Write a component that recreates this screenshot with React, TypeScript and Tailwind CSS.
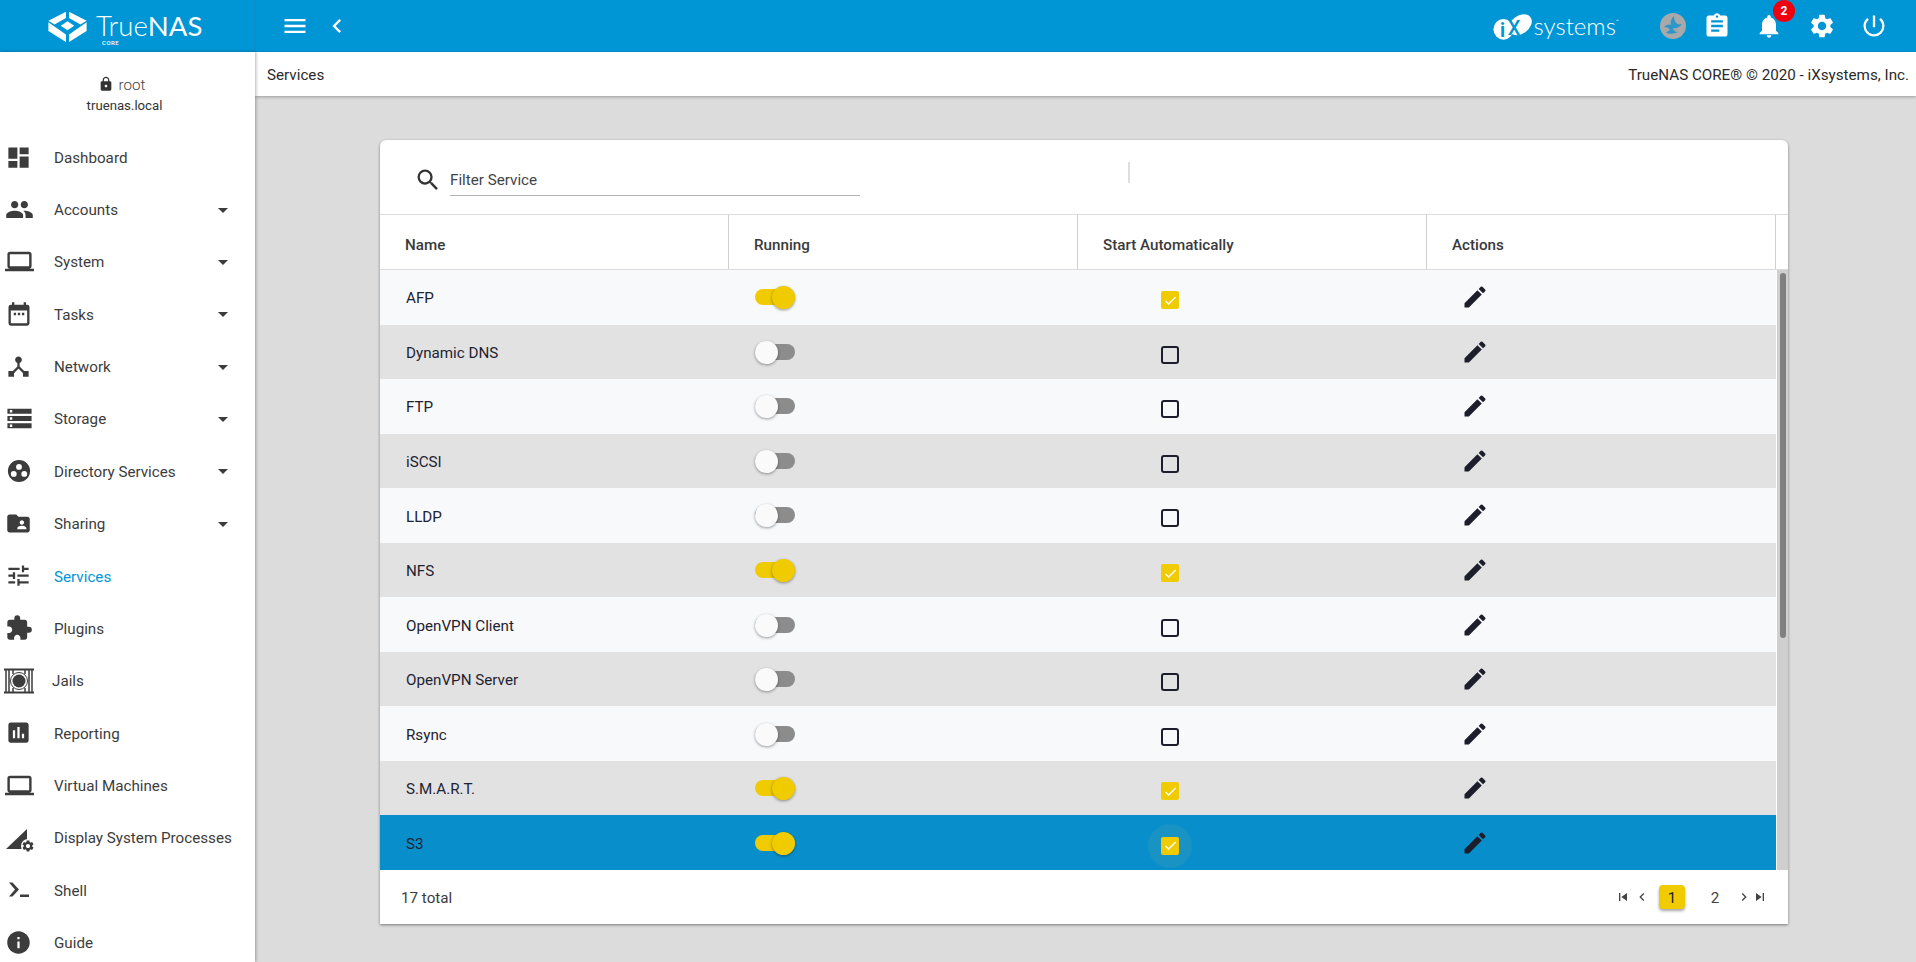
import React from 'react';
import {
  MdDashboard,
  MdPeople,
  MdLaptop,
  MdDeviceHub,
  MdStorage,
  MdFolderShared,
  MdTune,
  MdExtension,
  MdAssessment,
  MdInfo,
  MdArrowDropDown,
  MdMenu,
  MdChevronLeft,
  MdChevronRight,
  MdAssignment,
  MdNotifications,
  MdSettings,
  MdPowerSettingsNew,
  MdLock,
  MdSearch,
  MdEdit,
  MdSkipPrevious,
  MdSkipNext,
  MdCheck,
} from 'react-icons/md';

const CalendarIcon = () => (
  <svg width="28" height="28" viewBox="0 0 24 24" fill="currentColor">
    <path d="M19 4h-1V2h-2v2H8V2H6v2H5a2 2 0 0 0-2 2v14a2 2 0 0 0 2 2h14a2 2 0 0 0 2-2V6a2 2 0 0 0-2-2zm0 16H5V9h14v11z" />
    <path d="M7.500 11h2v2h-2zM11 11h2v2h-2zM14.500 11h2v2h-2z" />
  </svg>
);

const DirectoryIcon = () => (
  <svg width="28" height="28" viewBox="0 0 24 24" fill="currentColor">
    <path
      fillRule="evenodd"
      d="M12 2.500a9.500 9.500 0 1 0 0 19 9.500 9.500 0 0 0 0-19zM12 6a2.500 2.500 0 1 1 0 5 2.500 2.500 0 0 1 0-5zM7.500 12a2.500 2.500 0 1 1 0 5 2.500 2.500 0 0 1 0-5zM16.500 12a2.500 2.500 0 1 1 0 5 2.500 2.500 0 0 1 0-5z"
    />
  </svg>
);

const JailIcon = () => (
  <svg width="32" height="28" viewBox="0 0 32 28" fill="none" stroke="currentColor">
    <path d="M1 2.500h30M1 25.500h30" strokeWidth="2" />
    <path d="M3 3v22M6 3v22M26 3v22M29 3v22" strokeWidth="1.500" />
    <circle cx="16" cy="14" r="8.500" strokeWidth="1" />
    <circle cx="16" cy="14" r="6.500" fill="currentColor" stroke="none" />
    <path d="M10 3v4M22 3v4M10 21v4M22 21v4" strokeWidth="1.500" />
  </svg>
);

const ProcessIcon = () => (
  <span className="relative flex h-[28px] w-[28px]">
    <svg width="28" height="28" viewBox="0 0 28 28" fill="currentColor">
      <path d="M1 25 L22 5 V18 L17 25 Z" />
    </svg>
    <MdSettings size={14} className="absolute right-[-2px] bottom-[-1px] rounded-full bg-white" />
  </span>
);

const ShellIcon = () => (
  <svg width="28" height="28" viewBox="0 0 28 28" fill="currentColor">
    <path d="M4 6.500h3.500L14 13.500 7.500 20.500H4l6-7z" />
    <path d="M15 18.500h9v2.500h-9z" />
  </svg>
);

const TrueNasMark = () => (
  <svg width="39" height="31" viewBox="27 22 111 90" fill="white">
    <path d="M78 24 27 50 45 61 78 42zM87 24 138 50 120 61 87 42z" />
    <path d="M27 55V80L78 112V90zM138 55V80L87 112V90z" />
    <path d="M82.500 52 102 65 82.500 78 63 65z" />
  </svg>
);

const IxMark = () => (
  <svg width="40" height="27" viewBox="0 0 115 78" className="overflow-visible">
    <ellipse cx="30" cy="47" rx="29" ry="30" fill="white" />
    <ellipse cx="78" cy="34" rx="37" ry="26" fill="white" transform="rotate(-35 78 34)" />
    <text x="20" y="68" fontFamily="Roboto, sans-serif" fontSize="56" fontWeight="700" fill="#0095d5">
      i
    </text>
    <text x="42" y="64" fontFamily="Roboto, sans-serif" fontSize="58" fontWeight="500" fill="#0095d5">
      X
    </text>
  </svg>
);

const AvatarIcon = () => (
  <svg width="26" height="26" viewBox="0 0 26 26">
    <circle cx="13" cy="13" r="13" fill="#a9a9a9" />
    <path
      d="M14 3C11 6 10 9 11 12 8 11 6 12 4 14 7 14 9 15 10 17 8 18 7 19 6 20 10 21 14 21 18 19 15 19 13 17 13 15 16 16 20 14 22 11 19 12 16 11 15 8 14 6 14 4 14 3Z"
      fill="#2e96c9"
    />
  </svg>
);

const navItems = [
  { label: 'Dashboard', icon: <MdDashboard size={27} /> },
  { label: 'Accounts', icon: <MdPeople size={29} />, caret: true },
  { label: 'System', icon: <MdLaptop size={29} />, caret: true },
  { label: 'Tasks', icon: <CalendarIcon />, caret: true },
  { label: 'Network', icon: <MdDeviceHub size={27} />, caret: true },
  { label: 'Storage', icon: <MdStorage size={29} />, caret: true },
  { label: 'Directory Services', icon: <DirectoryIcon />, caret: true },
  { label: 'Sharing', icon: <MdFolderShared size={27} />, caret: true },
  { label: 'Services', icon: <MdTune size={27} />, active: true },
  { label: 'Plugins', icon: <MdExtension size={28} /> },
  { label: 'Jails', icon: <JailIcon />, jail: true },
  { label: 'Reporting', icon: <MdAssessment size={27} /> },
  { label: 'Virtual Machines', icon: <MdLaptop size={29} /> },
  { label: 'Display System Processes', icon: <ProcessIcon /> },
  { label: 'Shell', icon: <ShellIcon /> },
  { label: 'Guide', icon: <MdInfo size={27} /> },
];

const services = [
  { name: 'AFP', on: true },
  { name: 'Dynamic DNS', on: false },
  { name: 'FTP', on: false },
  { name: 'iSCSI', on: false },
  { name: 'LLDP', on: false },
  { name: 'NFS', on: true },
  { name: 'OpenVPN Client', on: false },
  { name: 'OpenVPN Server', on: false },
  { name: 'Rsync', on: false },
  { name: 'S.M.A.R.T.', on: true },
  { name: 'S3', on: true },
];

const Toggle = ({ on }: { on: boolean }) => (
  <span className="relative block h-[16px] w-[40px]">
    <span className={`block h-full w-full rounded-full ${on ? 'bg-[#f0cb00]' : 'bg-[#8c8c8c]'}`} />
    <span
      className={`absolute top-[-3px] h-[23px] w-[23px] rounded-full shadow-[0_1px_3px_rgba(0,0,0,0.4)] ${
        on ? 'right-0 bg-[#f0cb00]' : 'left-0 bg-[#fafafa]'
      }`}
    />
  </span>
);

const Checkbox = ({ on, halo }: { on: boolean; halo?: boolean }) => (
  <span className="relative block h-[18px] w-[18px]">
    {halo && <span className="absolute top-[-13px] left-[-13px] h-[44px] w-[44px] rounded-full bg-[#1893c4]" />}
    {on ? (
      <span className="relative flex h-[18px] w-[18px] items-center justify-center rounded-[2px] bg-[#f0cb00] text-white">
        <MdCheck size={15} />
      </span>
    ) : (
      <span className="block h-[18px] w-[18px] rounded-[3px] border-2 border-[#1c1f2b]" />
    )}
  </span>
);

export default function App() {
  return (
    <div className="flex h-[962px] w-[1916px] flex-col overflow-hidden bg-[#dcdcdc] font-['Roboto',sans-serif]">
      {/* Top bar */}
      <div className="flex h-[52px] flex-none items-center bg-[#0095d5] text-white">
        <div className="flex h-full w-[255px] flex-none items-center border-r border-[#0a8cc6] pl-[48px]">
          <TrueNasMark />
          <div className="mt-[8px] ml-[9px] flex flex-col items-start">
            <span className="text-[27.5px] leading-[22px] font-light font-['Lato',sans-serif]">
              True<span className="font-normal">NAS</span>
            </span>
            <span className="mt-[3px] ml-[6px] text-[6px] leading-[6px] font-medium tracking-[0.5px]">CORE</span>
          </div>
        </div>
        <button className="ml-[26px] flex">
          <MdMenu size={28} />
        </button>
        <button className="ml-[14px] flex">
          <MdChevronLeft size={28} />
        </button>
        <div className="flex-1" />
        <div className="flex items-center pr-[28px]">
          <IxMark />
          <span className="ml-[1px] text-[24px] leading-[24px] font-light font-['Lato',sans-serif]">systems</span>
          <span className="mb-[8px] text-[5px]">™</span>
          <span className="ml-[41px] flex">
            <AvatarIcon />
          </span>
          <span className="ml-[17px] flex">
            <MdAssignment size={28} />
          </span>
          <span className="relative ml-[24px] flex">
            <MdNotifications size={28} />
            <span className="absolute top-[-12px] right-[-12px] flex h-[22px] w-[22px] items-center justify-center rounded-full bg-[#f0000f] text-[12px] font-bold">
              2
            </span>
          </span>
          <span className="ml-[25px] flex">
            <MdSettings size={28} />
          </span>
          <span className="ml-[24px] flex">
            <MdPowerSettingsNew size={28} />
          </span>
        </div>
      </div>

      <div className="flex min-h-0 flex-1">
        {/* Sidebar */}
        <div className="z-10 w-[255px] flex-none overflow-hidden bg-white shadow-[1px_0_3px_rgba(0,0,0,0.3)]">
          <div className="flex h-[79px] flex-col items-center pt-[22px]">
            <div className="flex h-[22px] items-center pr-[12px] text-[15.2px] font-light text-[#444]">
              <MdLock size={16} className="mr-[5px] mb-[3px] text-[#333]" />
              root
            </div>
            <div className="mt-[1px] pr-[6px] text-[13.2px] leading-[18px] text-[#333]">truenas.local</div>
          </div>
          <div className="flex flex-col">
            {navItems.map((item) => (
              <div key={item.label} className="flex h-[52.35px] flex-none items-center text-[15.2px] text-[#3c3c3c]">
                <span className={`flex w-[54px] flex-none items-center ${item.jail ? 'pl-[3px]' : 'pl-[5px]'}`}>{item.icon}</span>
                <span className={`flex-1 pt-[2px] ${item.active ? 'text-[#0095d5]' : ''} ${item.jail ? 'ml-[-2px]' : ''}`}>{item.label}</span>
                {item.caret && <MdArrowDropDown size={24} className="mr-[20px]" />}
              </div>
            ))}
          </div>
        </div>

        {/* Main */}
        <div className="flex min-w-0 flex-1 flex-col">
          <div className="flex h-[44px] flex-none items-center justify-between bg-white pt-[2px] pr-[7px] pl-[12px] text-[15.2px] text-[#2b2b2b] shadow-[0_1px_3px_rgba(0,0,0,0.3)]">
            <span>Services</span>
            <span>TrueNAS CORE® © 2020 - iXsystems, Inc.</span>
          </div>

          <div className="pt-[44px] pl-[125px]">
            <div className="flex h-[784px] w-[1408px] flex-col rounded-t-[6px] bg-white shadow-[0_1px_3px_rgba(0,0,0,0.45)]">
              {/* Filter */}
              <div className="flex h-[75px] flex-none border-b border-[#dcdcdc]">
                <div className="mt-[26px] ml-[34px] flex h-[30px] items-start text-[#333]">
                  <MdSearch size={28} />
                </div>
                <div className="mt-[22px] ml-[8px] flex h-[34px] w-[410px] items-center border-b border-[#b5b5b5] pt-[4px] text-[15.2px] text-[#444]">
                  Filter Service
                </div>
                <div className="mt-[22px] ml-[268px] h-[21px] w-[2px] bg-[#dedede]" />
              </div>

              {/* Table head */}
              <div className="grid h-[55px] flex-none grid-cols-[349px_349px_349px_349px_1fr] border-b border-[#dcdcdc] text-[15.2px] font-medium text-[#3a3a3a]">
                <div className="flex items-center border-r border-[#cfcfcf] pt-[6px] pl-[25px]">Name</div>
                <div className="flex items-center border-r border-[#cfcfcf] pt-[6px] pl-[25px]">Running</div>
                <div className="flex items-center border-r border-[#cfcfcf] pt-[6px] pl-[25px]">Start Automatically</div>
                <div className="flex items-center border-r border-[#cfcfcf] pt-[6px] pl-[25px]">Actions</div>
                <div />
              </div>

              {/* Rows + scrollbar */}
              <div className="flex h-[600px] flex-none">
                <div className="flex w-[1396px] flex-none flex-col">
                  {services.map((s, i) => {
                    const selected = s.name === 'S3';
                    return (
                      <div
                        key={s.name}
                        className={`grid flex-1 grid-cols-[349px_349px_349px_1fr] items-center text-[15.2px] text-[#1f2230] ${
                          selected ? 'bg-[#088fcb]' : i % 2 === 0 ? 'bg-[#f8f9fb]' : 'bg-[#e2e2e3]'
                        }`}
                      >
                        <div className="pt-[3px] pl-[26px]">{s.name}</div>
                        <div className="pl-[26px]">
                          <Toggle on={s.on} />
                        </div>
                        <div className="pt-[6px] pl-[83px]">
                          <Checkbox on={s.on} halo={selected} />
                        </div>
                        <div className="pl-[34px] text-[#1c1f2b]">
                          <MdEdit size={28} />
                        </div>
                      </div>
                    );
                  })}
                </div>
                <div className="ml-[1px] flex-1 bg-[#cfcfcf] pt-[3px] pl-[3px]">
                  <div className="h-[365px] w-[6px] rounded-full bg-[#808080]" />
                </div>
              </div>

              {/* Footer */}
              <div className="flex flex-1 items-center justify-between pr-[20px] pl-[21px] text-[#3c3c3c]">
                <span className="pt-[2px] text-[15.2px]">17 total</span>
                <div className="flex items-center text-[#444]">
                  <MdSkipPrevious size={16} />
                  <MdChevronLeft size={16} className="ml-[3px]" />
                  <span className="ml-[9px] flex h-[24px] w-[26px] items-center justify-center rounded-[4px] bg-[#f0cb00] pt-[2px] text-[15.2px] text-[#222] shadow-[0_2px_3px_rgba(0,0,0,0.35)]">
                    1
                  </span>
                  <span className="ml-[24px] w-[12px] pt-[3px] text-center text-[15.2px]">2</span>
                  <MdChevronRight size={16} className="ml-[15px]" />
                  <MdSkipNext size={16} />
                </div>
              </div>
            </div>
          </div>
        </div>
      </div>
    </div>
  );
}
